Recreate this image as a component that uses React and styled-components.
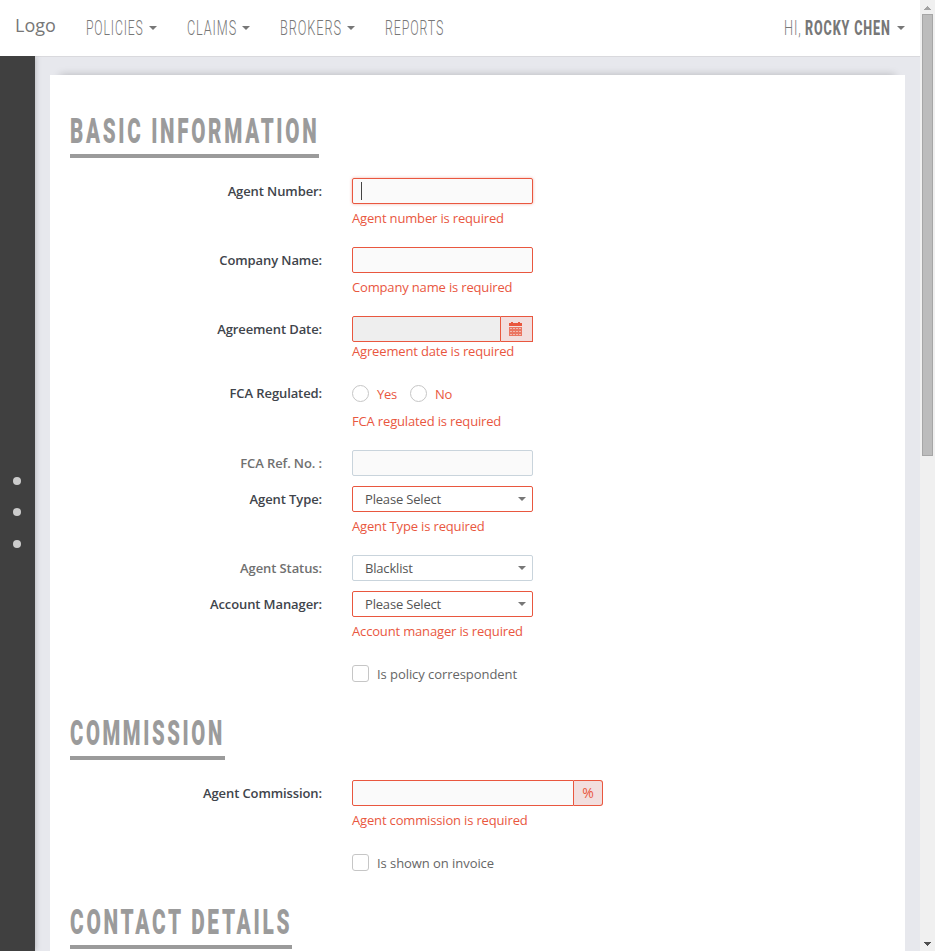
import React, { useLayoutEffect, useRef, useState } from "react";
import styled, { createGlobalStyle, css } from "styled-components";

const red = "#e9573f";

const GlobalStyle = createGlobalStyle`
  * { box-sizing: border-box; }
  html, body { margin: 0; height: 951px; overflow: hidden; }
  body { font: 13px/18px "Open Sans", sans-serif; color: #666; background: #e7e8ed; }
  input, button { font: inherit; color: inherit; }
`;

const Screen = styled.div`
  display: flex;
  height: 951px;
  overflow: hidden;
`;

const Main = styled.div`
  flex: 1;
  min-width: 0;
  display: flex;
  flex-direction: column;
`;

const Navbar = styled.header`
  flex: none;
  height: 56px;
  display: flex;
  align-items: center;
  padding: 0 15px;
  background: #fff;
  color: #777;
`;

const Brand = styled.a`
  width: 70px;
  padding-bottom: 6px;
  font-size: 18px;
  line-height: 24px;
`;

const Menu = styled.nav`
  display: flex;
  gap: 29px;
  flex: 1;
`;

const MenuItem = styled.a`
  display: flex;
  align-items: center;
  height: 24px;
  padding-bottom: 1px;
`;

const Caret = styled.i`
  margin-left: ${(p) => p.$gap || 6}px;
  border: 4px solid transparent;
  border-top-color: #777;
  border-bottom: 0;
`;

const CondensedBox = styled.span`
  display: block;
  flex: none;
  width: ${(p) => p.$width}px;
  height: ${(p) => p.$height}px;
  margin-left: ${(p) => p.$indent}px;
  white-space: nowrap;
`;

const CondensedText = styled.span`
  display: inline-block;
  transform-origin: 0 50%;
  font-family: Roboto, sans-serif;
  font-size: ${(p) => p.$size}px;
  line-height: ${(p) => p.$height}px;
  font-weight: ${(p) => p.$weight};
  letter-spacing: ${(p) => p.$tracking}em;
`;

function Condensed({ width, height = 24, size = 20, weight = 300, tracking = 0.07, indent = 0, children }) {
  const ref = useRef(null);
  const [scale, setScale] = useState(1);
  useLayoutEffect(() => {
    setScale(width / ref.current.offsetWidth);
  }, [width]);
  return (
    <CondensedBox $width={width} $height={height} $indent={indent}>
      <CondensedText
        ref={ref}
        $size={size}
        $height={height}
        $weight={weight}
        $tracking={tracking}
        style={{ transform: `scaleX(${scale})` }}
      >
        {children}
      </CondensedText>
    </CondensedBox>
  );
}

const Body = styled.div`
  flex: 1;
  min-height: 0;
  display: flex;
`;

const Sidebar = styled.aside`
  flex: none;
  width: 35px;
  display: flex;
  flex-direction: column;
  align-items: center;
  gap: 23.4px;
  padding: 421px 0 0 0;
  background: #404040;
  box-shadow: 0 0 6px rgba(0, 0, 0, 0.25);
  clip-path: inset(0 -10px 0 0);
  z-index: 1;
`;

const Dot = styled.span`
  width: 8px;
  height: 8px;
  margin-right: 2px;
  border-radius: 50%;
  background: #ccc;
`;

const Content = styled.main`
  flex: 1;
  padding: 18px 15px 0;
  border-top: 1px solid #d9d9dd;
  overflow: hidden;
`;

const Card = styled.form`
  height: 900px;
  padding: 31px 20px 0;
  background: #fff;
  box-shadow: 0 -10px 8px -10px rgba(0, 0, 0, 0.22);
`;

const Heading = styled.h2`
  width: fit-content;
  height: 52px;
  padding-top: 1px;
  margin: ${(p) => (p.$first ? 0 : 22)}px 0 20px;
  border-bottom: 4px solid #9b9b9b;
  color: #9b9b9b;
`;

const Row = styled.div`
  display: grid;
  grid-template-columns: 252px 1fr;
  column-gap: 30px;
  margin-bottom: ${(p) => (p.$last ? 0 : 10)}px;
`;

const Label = styled.label`
  line-height: 26px;
  text-align: right;
  font-weight: 600;
  letter-spacing: -0.1px;
  color: ${(p) => (p.$required ? "#40444b" : "#707070")};
`;

const Control = styled.div`
  display: flex;
  position: relative;
  width: ${(p) => p.$width || 181}px;
  height: 26px;
`;

const frame = css`
  border: 1px solid ${(p) => (p.$invalid ? red : "#c9d4dc")};
  border-radius: 2px;
`;

const Input = styled.input`
  ${frame}
  flex: 1;
  min-width: 0;
  height: 26px;
  padding: 0 9px;
  outline: 0;
  background: ${(p) => (p.readOnly ? "#eee" : "#fafafa")};
  ${(p) => p.$active && "box-shadow: 0 0 3px rgba(233, 87, 63, 0.5);"}
  ${(p) => p.$joined && "border-radius: 2px 0 0 2px;"}
`;

const TextCursor = styled.span`
  position: absolute;
  left: 9px;
  top: 4px;
  width: 1px;
  height: 18px;
  background: #444;
`;

const Addon = styled.span`
  display: flex;
  align-items: center;
  justify-content: center;
  width: ${(p) => p.$width}px;
  border: 1px solid ${red};
  border-left: 0;
  border-radius: 0 ${(p) => p.$radius}px ${(p) => p.$radius}px 0;
  background: #f2dede;
  color: ${red};
  font-size: 14px;
`;

const Select = styled.button`
  ${frame}
  flex: 1;
  display: flex;
  align-items: center;
  justify-content: space-between;
  padding: 0 6px 0 12px;
  background: #fff;
  color: #555;
  letter-spacing: -0.18px;
`;

const Error = styled.div`
  height: 18px;
  margin: ${(p) => p.$top ?? 5}px 0 10px;
  color: ${red};
  letter-spacing: -0.16px;
`;

const Options = styled.div`
  display: flex;
  gap: 13px;
  height: 26px;
`;

const Option = styled.label`
  display: flex;
  gap: 8px;
  padding-top: 5px;
  line-height: 19px;
  letter-spacing: ${(p) => (p.$invalid ? -0.25 : -0.06)}px;
  color: ${(p) => (p.$invalid ? red : "#666")};
`;

const Tick = styled.span`
  width: 17px;
  height: 17px;
  border: 1px solid #c6c6c6;
  border-radius: ${(p) => (p.$round ? "50%" : "3px")};
  background: #fff;
`;

const Scrollbar = styled.div`
  flex: none;
  width: 15px;
  display: flex;
  flex-direction: column;
  align-items: center;
  background: #f0f0f0;
`;

const Thumb = styled.div`
  width: 11px;
  height: 442px;
  border: 1px solid #a6a6a6;
  background: #bcbcbc;
`;

const ScrollArrow = styled.svg`
  display: block;
  width: 15px;
  height: 14px;
  ${(p) => p.$end && "margin-top: auto;"}
`;

const Calendar = styled.svg`
  display: block;
  width: 13px;
  height: 14px;
  margin-right: 2px;
`;

const CalendarIcon = () => (
  <Calendar viewBox="0 0 13 14" shapeRendering="crispEdges">
    <path d="M2 0h2v1h5V0h2v1h2v3H0V1h2z" fill={red} />
    <path d="M0 5h13v9H0z" fill={red} opacity=".78" />
    <path
      d="M1 6.5h11M1 9.5h11M1 12.5h11"
      stroke="#f2dede"
      strokeDasharray="2 1"
      opacity=".65"
    />
  </Calendar>
);

function Section({ title, width, first }) {
  return (
    <Heading $first={first}>
      <Condensed width={width} height={48} size={35.5} weight={900} tracking={0.13}>
        {title}
      </Condensed>
    </Heading>
  );
}

function Field({ label, required, error, errorTop, children }) {
  return (
    <Row>
      <Label $required={required}>{label}</Label>
      <div>
        {children}
        {error && <Error $top={errorTop}>{error}</Error>}
      </div>
    </Row>
  );
}

function Dropdown({ value, invalid }) {
  return (
    <Control>
      <Select type="button" $invalid={invalid}>
        {value}
        <Caret />
      </Select>
    </Control>
  );
}

function Checkbox({ children }) {
  return (
    <Row $last>
      <span />
      <Options>
        <Option>
          <Tick />
          {children}
        </Option>
      </Options>
    </Row>
  );
}

export default function App() {
  return (
    <Screen>
      <GlobalStyle />
      <Main>
        <Navbar>
          <Brand>Logo</Brand>
          <Menu>
            <MenuItem><Condensed width={58} indent={1}>POLICIES</Condensed><Caret $gap={5} /></MenuItem>
            <MenuItem><Condensed width={50} indent={1}>CLAIMS</Condensed><Caret $gap={5} /></MenuItem>
            <MenuItem><Condensed width={62} indent={1}>BROKERS</Condensed><Caret $gap={5} /></MenuItem>
            <MenuItem><Condensed width={59} indent={1}>REPORTS</Condensed></MenuItem>
          </Menu>
          <MenuItem>
            <Condensed width={18}>HI,</Condensed>
            <Condensed width={86} weight={800} indent={3}>ROCKY CHEN</Condensed>
            <Caret />
          </MenuItem>
        </Navbar>
        <Body>
          <Sidebar><Dot /><Dot /><Dot /></Sidebar>
          <Content>
            <Card>
              <Section title="BASIC INFORMATION" width={249} first />
              <Field label="Agent Number:" required error="Agent number is required">
                <Control>
                  <Input $invalid $active />
                  <TextCursor />
                </Control>
              </Field>
              <Field label="Company Name:" required error="Company name is required">
                <Control><Input $invalid /></Control>
              </Field>
              <Field label="Agreement Date:" required error="Agreement date is required" errorTop={0}>
                <Control>
                  <Input $invalid $joined readOnly />
                  <Addon $width={32} $radius={0}><CalendarIcon /></Addon>
                </Control>
              </Field>
              <Field label="FCA Regulated:" required error="FCA regulated is required" errorTop={6}>
                <Options>
                  <Option $invalid><Tick $round />Yes</Option>
                  <Option $invalid><Tick $round />No</Option>
                </Options>
              </Field>
              <Field label="FCA Ref. No. :">
                <Control><Input /></Control>
              </Field>
              <Field label="Agent Type:" required error="Agent Type is required">
                <Dropdown value="Please Select" invalid />
              </Field>
              <Field label="Agent Status:">
                <Dropdown value="Blacklist" />
              </Field>
              <Field label="Account Manager:" required error="Account manager is required">
                <Dropdown value="Please Select" invalid />
              </Field>
              <Checkbox>Is policy correspondent</Checkbox>

              <Section title="COMMISSION" width={155} />
              <Field label="Agent Commission:" required error="Agent commission is required">
                <Control $width={251}>
                  <Input $invalid $joined />
                  <Addon $width={29} $radius={3}>%</Addon>
                </Control>
              </Field>
              <Checkbox>Is shown on invoice</Checkbox>

              <Section title="CONTACT DETAILS" width={222} />
            </Card>
          </Content>
        </Body>
      </Main>
      <Scrollbar>
        <ScrollArrow viewBox="0 0 15 14" shapeRendering="crispEdges">
          <path d="M4 10h7v-1h-1v-1h-1v-1h-1v-1h-1v1h-1v1h-1v1h-1z" fill="#a3a3a3" />
        </ScrollArrow>
        <Thumb />
        <ScrollArrow $end viewBox="0 0 15 14" shapeRendering="crispEdges">
          <path d="M4 5h7v1h-1v1h-1v1h-1v1h-1v-1h-1v-1h-1v-1h-1z" fill="#505050" />
        </ScrollArrow>
      </Scrollbar>
    </Screen>
  );
}
